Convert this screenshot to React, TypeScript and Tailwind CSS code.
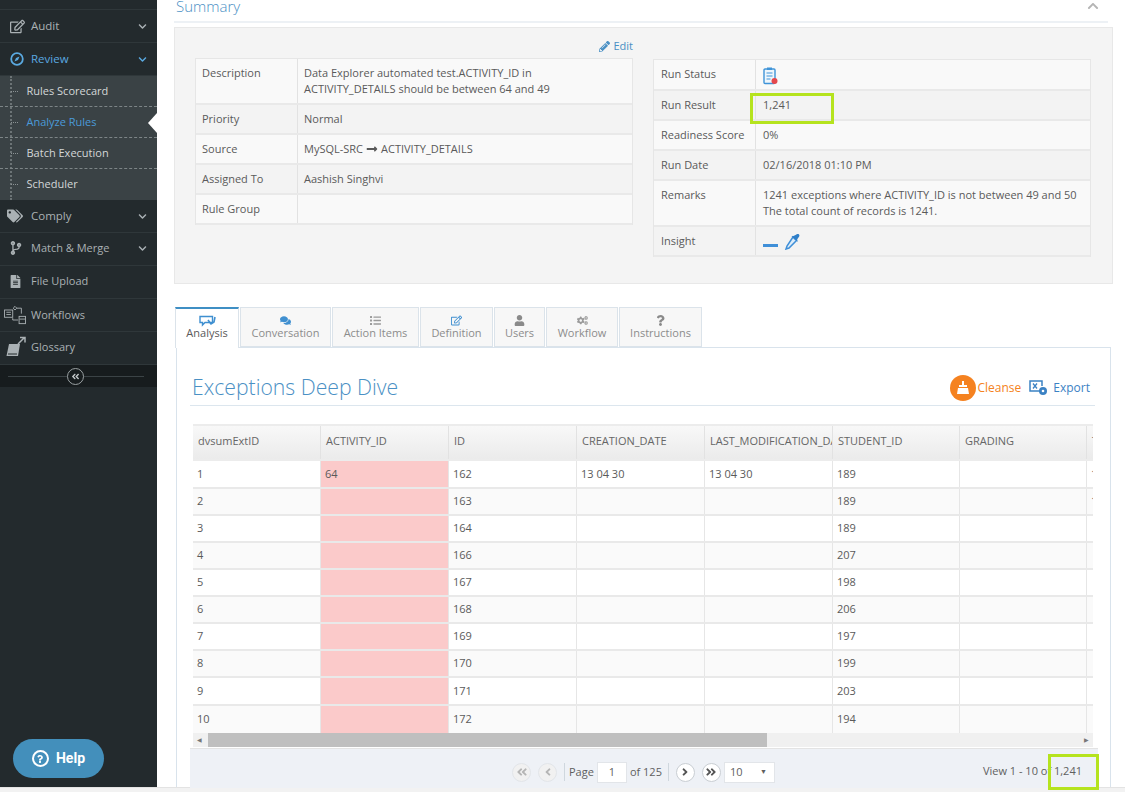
import React from 'react';
import {
  FaAngleDoubleLeft,
  FaAngleDoubleRight,
  FaAngleLeft,
  FaAngleRight,
  FaChevronDown,
  FaChevronUp,
  FaCodeBranch,
  FaCogs,
  FaComments,
  FaFileAlt,
  FaList,
  FaLongArrowAltRight,
  FaPencilAlt,
  FaQuestion,
  FaRegEdit,
  FaTags,
  FaUser,
} from 'react-icons/fa';

const WorkflowIcon = () => (
  <svg width="24" height="20" viewBox="0 0 26 22" fill="none" stroke="currentColor" strokeWidth="1">
    <rect x="1.5" y="5.5" width="9" height="8" />
    <path d="M3.5 8h5M3.5 10.500h5M10.500 14.500v2h6" />
    <path d="M11 3.500l2-2 2 2-2 2zM15 3.500h5v6" />
    <rect x="17.500" y="12.500" width="7" height="8" />
    <path d="M18 15.500h6" />
  </svg>
);

const BookIcon = () => (
  <svg width="22" height="22" viewBox="0 0 22 22">
    <path d="M4 8h11l-2 12H1.500z" fill="currentColor" />
    <path d="M3 18h9" stroke="#232a2d" strokeWidth="1" />
    <path d="M13 8l6-6M15 1.500h5v5" stroke="currentColor" strokeWidth="1.500" fill="none" />
  </svg>
);

const CompassRing = () => (
  <svg width="14" height="14" viewBox="0 0 14 14" fill="none">
    <circle cx="7" cy="7" r="5.800" stroke="currentColor" strokeWidth="1.800" />
    <path d="M9.500 4.500L8 8 4.500 9.500 6 6z" fill="currentColor" />
  </svg>
);

const ClipboardIcon = () => (
  <svg width="15" height="18" viewBox="0 0 15 18" fill="none">
    <rect x="1" y="2" width="11" height="14.500" rx="1" fill="#eef6fc" stroke="#3f94d8" strokeWidth="1.400" />
    <rect x="4" y="0.500" width="5" height="2.500" fill="#3f94d8" />
    <path d="M3.500 6h6M3.500 9h6M3.500 12h4" stroke="#3f94d8" />
    <circle cx="11.500" cy="14" r="3" fill="#e5484d" />
  </svg>
);

const DropperIcon = () => (
  <svg width="16" height="17" viewBox="0 0 16 17" fill="none">
    <path d="M9 4l3.500 3.500L5 15l-3 1 1-3z" fill="#dcecf9" stroke="#3f8fd8" strokeWidth="1.500" />
    <path d="M7.500 3.500l2-.5 2-1C12.500 1.500 14 .5 15 1.500s0 2.500-1 3.500l-1 2 1 2z" fill="#2f7fc8" />
  </svg>
);

const AnalysisIcon = () => (
  <svg width="17" height="12" viewBox="0 0 17 12" fill="none">
    <path d="M1 1.500h12.500v6H6L3.500 10V7.500H1z" stroke="#3f8fd0" strokeWidth="1.400" />
    <path d="M9 5l3 4 3-2 1-5" stroke="#3f8fd0" strokeWidth="1.600" />
  </svg>
);

const ExportIcon = () => (
  <svg width="19" height="16" viewBox="0 0 19 16" fill="none">
    <path d="M11 11H1V1h12v5" stroke="#3b82c4" strokeWidth="1.500" />
    <path d="M4 3.500l4 5M8 3.500l-4 5" stroke="#3b82c4" strokeWidth="1.300" />
    <circle cx="14" cy="11" r="4" fill="#3b82c4" />
    <circle cx="14" cy="11" r="1.300" fill="#fff" />
  </svg>
);

const BroomIcon = () => (
  <svg width="14" height="14" viewBox="0 0 14 14">
    <path d="M6 0h2v4h3v2H3V4h3z" fill="#fff" />
    <path d="M2 7h10l1 6H1z" fill="#fff" />
  </svg>
);

const SideItem = ({
  icon,
  label,
  chevron,
  active,
  small,
  lift,
}: {
  icon: React.ReactNode;
  label: string;
  chevron?: boolean;
  active?: boolean;
  small?: boolean;
  lift?: boolean;
}) => (
  <div
    className={`flex h-[33px] items-center border-b border-[#2f373a] ${lift ? 'pb-[2px]' : ''} ${active ? 'text-[#5aa9e0]' : 'text-[#aab1b4]'}`}
  >
    <span className="flex w-[31px] shrink-0 items-center justify-center">{icon}</span>
    <span className={small ? 'text-[11px]' : 'text-[11.500px]'}>{label}</span>
    {chevron && <FaChevronDown className="ml-auto mr-[10px] text-[9px]" />}
  </div>
);

const SubItem = ({ label, active, last }: { label: string; active?: boolean; last?: boolean }) => (
  <div
    className={`relative flex h-[31px] items-center pl-[26.500px] text-[11px] ${active ? 'text-[#4a9ad8]' : 'text-[#d3d7d8]'} ${last ? '' : 'border-b border-dashed border-[#7d8587]'}`}
  >
    <span className="absolute left-[11px] top-[15px] w-[7px] border-t border-dotted border-[#8b9294]" />
    {label}
    {active && (
      <span className="absolute right-0 top-[6px] h-0 w-0 border-y-[10px] border-r-[9px] border-y-transparent border-r-white" />
    )}
  </div>
);

const Sidebar = () => (
  <aside className="flex h-[787px] w-[157px] shrink-0 flex-col bg-[#232a2d]">
    <div className="h-[10px] border-b border-[#2f373a]" />
    <SideItem icon={<FaRegEdit className="ml-[3px] text-[15px]" />} label="Audit" chevron />
    <SideItem icon={<span className="ml-[3px]"><CompassRing /></span>} label="Review" chevron active />
    <div className="relative bg-[#3a4245]">
      <span className="absolute bottom-0 left-[10px] top-0 border-l-2 border-dotted border-[#6c7476]" />
      <SubItem label="Rules Scorecard" />
      <SubItem label="Analyze Rules" active />
      <SubItem label="Batch Execution" />
      <SubItem label="Scheduler" last />
    </div>
    <SideItem icon={<FaTags className="-ml-[1px] text-[16px]" />} label="Comply" chevron />
    <SideItem icon={<FaCodeBranch className="text-[14px]" />} label="Match & Merge" chevron small lift />
    <SideItem icon={<FaFileAlt className="text-[13px]" />} label="File Upload" small lift />
    <SideItem icon={<span className="-ml-[2px] block"><WorkflowIcon /></span>} label="Workflows" small />
    <SideItem icon={<BookIcon />} label="Glossary" small lift />
    <div className="relative flex h-[22px] items-center bg-[#171c1e] pl-[67px]">
      <span className="absolute left-[8px] right-[13px] border-t border-[#3b4346]" />
      <span className="relative flex h-[17px] w-[17px] items-center justify-center rounded-full border border-[#9aa1a3] bg-[#171c1e] text-[#c3c8ca]">
        <FaAngleDoubleLeft className="text-[9px]" />
      </span>
    </div>
    <div className="flex flex-1 items-end pb-[9px] pl-[13px]">
      <div className="flex h-[39px] w-[91px] items-center justify-center gap-[7px] rounded-full bg-[#438fbb] text-white">
        <span className="flex h-[17px] w-[17px] items-center justify-center rounded-full border-2 border-white">
          <FaQuestion className="text-[8px]" />
        </span>
        <span className="font-['Roboto',sans-serif] text-[14px] font-bold">Help</span>
      </div>
    </div>
  </aside>
);

const KvRow = ({
  label,
  children,
  h,
  shade,
  tight,
}: {
  label: string;
  children?: React.ReactNode;
  h: string;
  shade?: boolean;
  tight?: boolean;
}) => (
  <div className={`flex ${h} border-b-2 border-[#e9e9e9] ${shade ? 'bg-[#f3f3f3]' : 'bg-[#f9f9f9]'}`}>
    <div className={`w-[102px] shrink-0 border-r border-[#e2e2e2] pt-[6px] ${tight ? 'px-[6px]' : 'px-[7px]'}`}>{label}</div>
    <div className={`min-w-0 flex-1 pt-[6px] ${tight ? 'px-[6px]' : 'px-[7px]'}`}>{children}</div>
  </div>
);

const Summary = () => (
  <section className="px-[17px]">
    <div className="flex h-[23px] items-start justify-between border-b-2 border-[#edf1f5] pl-[2px] pr-[9px]">
      <h2 className="-mt-[4px] text-[15px] font-light leading-[20px] text-[#4a90c4]">Summary</h2>
      <FaChevronUp className="mt-[0px] text-[12px] text-[#b5b5b5]" />
    </div>
    <div className="mt-[4px] flex h-[257px] w-[939px] gap-[20px] border border-[#e8e8e8] bg-[#f4f4f4] pl-[20px] pr-[21px] text-[11px] leading-[16px] text-[#5a5a5a]">
      <div className="w-[438px]">
        <div className="flex h-[30px] items-end justify-end pb-[4px] text-[#4a90c4]">
          <FaPencilAlt className="mr-[3px] mb-[2px] text-[11px]" /> Edit
        </div>
        <div className="border-x border-t border-[#e6e6e6]">
          <KvRow label="Description" h="h-[46px]" tight>
            Data Explorer automated test.ACTIVITY_ID in ACTIVITY_DETAILS should be between 64 and 49
          </KvRow>
          <KvRow label="Priority" h="h-[30px]" shade tight>
            Normal
          </KvRow>
          <KvRow label="Source" h="h-[30px]" tight>
            <span className="flex items-center">
              MySQL-SRC
              <FaLongArrowAltRight className="mx-[3px] text-[12px]" />
              ACTIVITY_DETAILS
            </span>
          </KvRow>
          <KvRow label="Assigned To" h="h-[30px]" shade tight>
            Aashish Singhvi
          </KvRow>
          <KvRow label="Rule Group" h="h-[30px]" tight />
        </div>
      </div>
      <div className="w-[438px] pt-[31px]">
        <div className="border-x border-t border-[#e6e6e6]">
          <KvRow label="Run Status" h="h-[31px]">
            <span className="block pt-[1px]"><ClipboardIcon /></span>
          </KvRow>
          <KvRow label="Run Result" h="h-[30px]" shade>
            1,241
          </KvRow>
          <KvRow label="Readiness Score" h="h-[30px]">
            0%
          </KvRow>
          <KvRow label="Run Date" h="h-[30px]" shade>
            02/16/2018 01:10 PM
          </KvRow>
          <KvRow label="Remarks" h="h-[46px]">
            1241 exceptions where ACTIVITY_ID is not between 49 and 50
            <br />
            The total count of records is 1241.
          </KvRow>
          <KvRow label="Insight" h="h-[30px]" shade>
            <div className="flex items-start gap-[6px]">
              <span className="mt-[11px] h-[3px] w-[15px] bg-[#3f8fd8]" />
              <span className="block"><DropperIcon /></span>
            </div>
          </KvRow>
        </div>
      </div>
    </div>
  </section>
);

const tabs = [
  { label: 'Conversation', w: 'w-[91px]', icon: <FaComments className="text-[#3f8fd0]" /> },
  { label: 'Action Items', w: 'w-[87px]', icon: <FaList className="text-[#9a9a9a]" /> },
  { label: 'Definition', w: 'w-[73px]', icon: <FaRegEdit className="text-[#3f8fd0]" /> },
  { label: 'Users', w: 'w-[51px]', icon: <FaUser className="text-[#8a8a8a]" /> },
  { label: 'Workflow', w: 'w-[72px]', icon: <FaCogs className="text-[#9a9a9a]" /> },
  { label: 'Instructions', w: 'w-[83px]', icon: <FaQuestion className="text-[#8a8a8a]" /> },
];

const Tabs = () => (
  <div className="relative z-10 ml-[18px] flex h-[41px] gap-[1px] text-[11px]">
    <div className="flex h-[41px] w-[64px] flex-col items-center border-x border-t-2 border-x-[#dbe3ea] border-t-[#3f8fc4] bg-white pt-[6px] text-[#5a5a5a]">
      <span className="flex h-[11px] items-center"><AnalysisIcon /></span>
      <span className="-mt-[1px] leading-[15px]">Analysis</span>
    </div>
    {tabs.map((tab) => (
      <div
        key={tab.label}
        className={`flex h-[40px] ${tab.w} flex-col items-center border border-[#dbe3ea] bg-[#f7f7f7] pt-[7px] text-[#8c8c8c]`}
      >
        <span className="flex h-[11px] items-center text-[11px]">{tab.icon}</span>
        <span className="-mt-[1px] leading-[15px]">{tab.label}</span>
      </div>
    ))}
  </div>
);

const columns = ['dvsumExtID', 'ACTIVITY_ID', 'ID', 'CREATION_DATE', 'LAST_MODIFICATION_DATE', 'STUDENT_ID', 'GRADING', 'T'];

const rows = [
  { ext: '1', activity: '64', id: '162', created: '13 04 30', modified: '13 04 30', student: '189', h: 'h-[28px]', next: '1' },
  { ext: '2', activity: '', id: '163', created: '', modified: '', student: '189', h: 'h-[27px]', next: '1' },
  { ext: '3', activity: '', id: '164', created: '', modified: '', student: '189', h: 'h-[27px]', next: '' },
  { ext: '4', activity: '', id: '166', created: '', modified: '', student: '207', h: 'h-[27px]', next: '' },
  { ext: '5', activity: '', id: '167', created: '', modified: '', student: '198', h: 'h-[27px]', next: '' },
  { ext: '6', activity: '', id: '168', created: '', modified: '', student: '206', h: 'h-[27px]', next: '' },
  { ext: '7', activity: '', id: '169', created: '', modified: '', student: '197', h: 'h-[27px]', next: '' },
  { ext: '8', activity: '', id: '170', created: '', modified: '', student: '199', h: 'h-[27px]', next: '' },
  { ext: '9', activity: '', id: '171', created: '', modified: '', student: '203', h: 'h-[28px]', next: '' },
  { ext: '10', activity: '', id: '172', created: '', modified: '', student: '194', h: 'h-[27px]', next: '' },
];

const colW = ['w-[128px]', 'w-[128px]', 'w-[128px]', 'w-[128px]', 'w-[128px]', 'w-[127px]', 'w-[127px]', 'w-[20px]'];

const Cell = ({ i, pink, children }: { i: number; pink?: boolean; children?: React.ReactNode }) => (
  <div
    className={`${colW[i]} flex shrink-0 items-center overflow-hidden whitespace-nowrap border-r border-[#e6e6e6] pl-[4px] ${pink ? 'bg-[#fbcaca]' : ''}`}
  >
    {children}
  </div>
);

const DataGrid = () => (
  <div className="mx-[3px] mt-[18px] w-[900px] overflow-hidden text-[11px] text-[#5a5a5a]">
    <div className="flex h-[37px] border-y-2 border-y-[#ececec] bg-gradient-to-b from-[#f8f8f8] to-[#ebebeb]">
      {columns.map((col, i) => (
        <div
          key={col}
          className={`${colW[i]} flex shrink-0 items-center overflow-hidden whitespace-nowrap border-r border-[#e2e2e2] pb-[2px] pl-[5px] text-[#666]`}
        >
          {col}
        </div>
      ))}
    </div>
    {rows.map((row, n) => (
      <div
        key={row.ext}
        className={`flex ${row.h} ${n === 9 ? '' : 'border-b-2 border-[#e9e9e9]'} ${n % 2 ? 'bg-[#fafafa]' : 'bg-white'}`}
      >
        <Cell i={0}>{row.ext}</Cell>
        <Cell i={1} pink>{row.activity}</Cell>
        <Cell i={2}>{row.id}</Cell>
        <Cell i={3}>{row.created}</Cell>
        <Cell i={4}>{row.modified}</Cell>
        <Cell i={5}>{row.student}</Cell>
        <Cell i={6} />
        <Cell i={7}>{row.next}</Cell>
      </div>
    ))}
    <div className="flex h-[14px] items-center bg-[#f0f0f0] text-[6px] text-[#777]">
      <span className="w-[15px] pl-[4px]">◀</span>
      <span className="h-[14px] w-[559px] bg-[#bfbfbf]" />
      <span className="ml-auto mr-[4px]">▶</span>
    </div>
  </div>
);

const PagerButton = ({ children, strong }: { children: React.ReactNode; strong?: boolean }) => (
  <span
    className={`flex h-[19px] w-[19px] items-center justify-center rounded-full border text-[12px] ${strong ? 'border-[#c9ced3] bg-white text-[#555]' : 'border-[#e2e5e9] bg-[#f1f1f1] text-[#b5b5b5]'}`}
  >
    {children}
  </span>
);

const Pager = () => (
  <div className="relative mt-[1px] flex h-[40px] w-[908px] items-center border-t border-[#e3e3e3] bg-[#eef1f6] pl-[322px] pt-[7px] text-[11px] text-[#5f5f5f]">
    <PagerButton><FaAngleDoubleLeft /></PagerButton>
    <span className="ml-[7px]"><PagerButton><FaAngleLeft /></PagerButton></span>
    <span className="ml-[7px] h-[18px] border-l border-[#cfd7de]" />
    <span className="ml-[4px]">Page</span>
    <span className="ml-[3px] flex h-[21px] w-[30px] items-center justify-center border border-[#e2e5e9] bg-white">1</span>
    <span className="ml-[3px]">of 125</span>
    <span className="ml-[6px] h-[18px] border-l border-[#cfd7de]" />
    <span className="ml-[7px]"><PagerButton strong><FaAngleRight /></PagerButton></span>
    <span className="ml-[7px]"><PagerButton strong><FaAngleDoubleRight /></PagerButton></span>
    <span className="ml-[3px] flex h-[21px] w-[51px] items-center justify-between border border-[#e2e5e9] bg-white pl-[5px] pr-[7px]">
      10 <span className="text-[7px]">▼</span>
    </span>
    <span className="absolute right-[16px] top-[14px]">View 1 - 10 of 1,241</span>
  </div>
);

const DeepDive = () => (
  <div className="ml-[19px] -mt-[1px] h-[440px] w-[935px] border-x border-t border-[#d9e3ec] pl-[13px]">
    <div className="flex h-[58px] w-[905px] items-end justify-between border-b border-[#dce6ee] pr-[5px] pb-[4px]">
      <h2 className="pl-[2px] text-[21.200px] font-light leading-[28px] text-[#4a90c4]">Exceptions Deep Dive</h2>
      <div className="flex items-center text-[12px]">
        <span className="mt-[1px] flex h-[26px] w-[26px] items-center justify-center rounded-full bg-[#f58220]">
          <BroomIcon />
        </span>
        <span className="ml-[1px] text-[#f58220]">Cleanse</span>
        <span className="ml-[8px]"><ExportIcon /></span>
        <span className="ml-[5px] text-[#3b82c4]">Export</span>
      </div>
    </div>
    <DataGrid />
    <Pager />
  </div>
);

export default function App() {
  return (
    <div className="relative h-[792px] w-[1125px] overflow-hidden bg-white font-['Open_Sans',sans-serif]">
      <div className="flex h-[787px]">
        <Sidebar />
        <main className="min-w-0 flex-1">
          <Summary />
          <div className="h-[23px]" />
          <Tabs />
          <DeepDive />
        </main>
      </div>
      <div className="h-[5px] border-t border-[#e3e3e3] bg-[#f2f2f2]" />
      {/* green callouts drawn on top of the screenshot */}
      <div className="absolute left-[750px] top-[93px] h-[31px] w-[84px] border-[3px] border-[#b5e31e]" />
      <div className="absolute left-[1048px] top-[754px] h-[36px] w-[51px] border-[3px] border-[#b5e31e]" />
    </div>
  );
}
